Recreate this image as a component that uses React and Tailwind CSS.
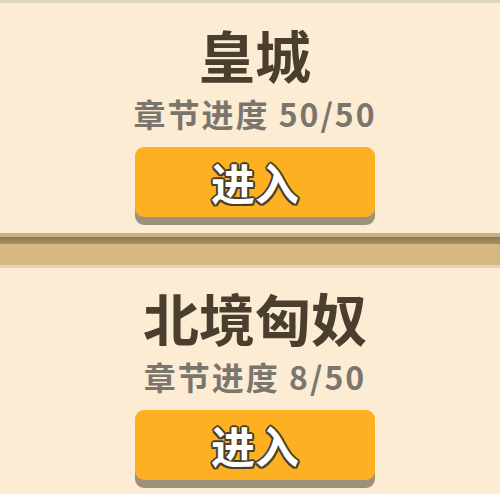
import React from 'react';

const chapters = [
  { name: '皇城', done: 50, total: 50 },
  { name: '北境匈奴', done: 8, total: 50 },
];

const font = { fontFamily: '"Noto Sans CJK SC", "Noto Sans", sans-serif' };

function ChapterCard({ chapter, first }) {
  return (
    <div className={`flex flex-col items-center bg-[#fbecd3] pl-[10px] ${first ? 'pt-[23px] pb-[7px]' : 'pt-[21px] pb-[10px]'}`}>
      <h2 className="text-[56px] leading-[56px] font-bold text-[#4a3f2f]">{chapter.name}</h2>
      <p className="mt-[15px] text-[32px] leading-[32px] font-bold tracking-[2px] text-[#7a766e]">
        章节进度 {chapter.done}/{chapter.total}
      </p>
      <button
        className="mt-[18px] w-[240px] h-[70px] rounded-[9px] bg-[#fcb022] shadow-[0_8px_0_#9d917a] flex items-center justify-center"
      >
        <span
          className="text-[44px] leading-[44px] font-bold text-white"
          style={{
            textShadow:
              '2px 0 0 #4a3f2f, -2px 0 0 #4a3f2f, 0 2px 0 #4a3f2f, 0 -2px 0 #4a3f2f, 1.5px 1.5px 0 #4a3f2f, -1.5px 1.5px 0 #4a3f2f, 1.5px -1.5px 0 #4a3f2f, -1.5px -1.5px 0 #4a3f2f',
          }}
        >
          进入
        </span>
      </button>
      <div className="h-[9px]" />
    </div>
  );
}

export default function App() {
  return (
    <div className="w-[500px] h-[494px] overflow-hidden bg-[#fbecd3]" style={font}>
      <div className="h-[3px] bg-[#d9d6bd]" />
      <ChapterCard chapter={chapters[0]} first />
      {/* 分隔木条 */}
      <div className="h-[35px] flex flex-col">
        <div className="h-[4px] bg-[#c6b088]" />
        <div className="h-[7px] bg-gradient-to-b from-[#8c7853] to-[#a8915f]" />
        <div className="flex-1 bg-[#d5b882]" />
        <div className="h-[3px] bg-[#e6d3ad]" />
      </div>
      <ChapterCard chapter={chapters[1]} />
    </div>
  );
}
